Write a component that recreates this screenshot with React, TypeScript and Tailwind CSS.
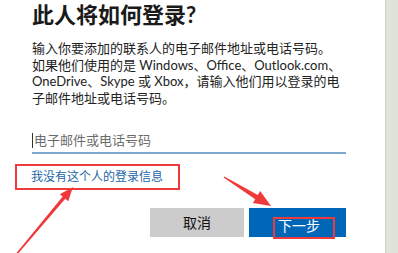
import React from "react";

const font = { fontFamily: '"Lato", "Noto Sans CJK SC", sans-serif' };

function arrowPoints(x1: number, y1: number, x2: number, y2: number, tail: number, neck: number, headW: number, headL: number) {
  const dx = x2 - x1;
  const dy = y2 - y1;
  const len = Math.hypot(dx, dy);
  const ux = dx / len;
  const uy = dy / len;
  const nx = -uy;
  const ny = ux;
  const bx = x2 - ux * headL;
  const by = y2 - uy * headL;
  const p = (x: number, y: number) => `${x.toFixed(1)},${y.toFixed(1)}`;
  return [
    p(x1 + nx * tail / 2, y1 + ny * tail / 2),
    p(bx + nx * neck / 2, by + ny * neck / 2),
    p(bx + nx * headW / 2, by + ny * headW / 2),
    p(x2, y2),
    p(bx - nx * headW / 2, by - ny * headW / 2),
    p(bx - nx * neck / 2, by - ny * neck / 2),
    p(x1 - nx * tail / 2, y1 - ny * tail / 2),
  ].join(" ");
}

export default function App() {
  return (
    <div className="relative flex h-[253px] w-[398px] overflow-hidden bg-white" style={font}>
      <div className="flex w-[385px] flex-col pl-[32px] pr-[39px]">
        <h1 className="mt-[1px] text-[22px] font-bold leading-[28px] text-[#1a1a1a]">此人将如何登录?</h1>
        <p className="mt-[11px] whitespace-nowrap text-[13px] leading-[16.7px] text-[#222]">
          输入你要添加的联系人的电子邮件地址或电话号码。
          <br />
          如果他们使用的是 Windows、Office、Outlook.com、
          <br />
          OneDrive、Skype 或 Xbox，请输入他们用以登录的电
          <br />
          子邮件地址或电话号码。
        </p>
        <div className="mt-[22px] flex h-[25px] items-center border-b-2 border-[#7ea8cd]">
          <span className="mr-[1px] h-[15px] w-[1px] bg-[#333]" />
          <span className="text-[13px] leading-none text-[#6b6b6b]">电子邮件或电话号码</span>
        </div>
        <div className="ml-[-17px] mt-[10px] flex h-[26px] w-[165px] items-center border-[2.5px] border-[#ee3a3a] pl-[14px]">
          <span className="text-[12px] leading-none text-[#2466a8]">我没有这个人的登录信息</span>
        </div>
        <div className="mt-[18px] flex justify-end gap-[5px]">
          <button className="flex h-[29px] w-[94px] items-center justify-center bg-[#cccccc] text-[14px] text-[#111]">
            取消
          </button>
          <button className="flex h-[29px] w-[97px] items-start bg-[#0067b8] pl-[24px] pt-[9px]">
            <span className="flex h-[22px] w-[62px] items-start border-2 border-[#ee3a3a] pl-[3px] text-[14px] leading-[14px] text-white">
              下一步
            </span>
          </button>
        </div>
      </div>
      <div className="w-[13px] border-l border-[#cfd6c8] bg-[#dfe4d9]" />
      <svg className="pointer-events-none absolute left-0 top-0" width="398" height="253">
        <polygon points={arrowPoints(15, 256, 73, 187, 1.5, 3.5, 11, 14)} fill="#f03a3a" />
        <polygon points={arrowPoints(224, 177, 271, 206, 1.5, 5, 14, 17)} fill="#f03a3a" />
      </svg>
    </div>
  );
}
